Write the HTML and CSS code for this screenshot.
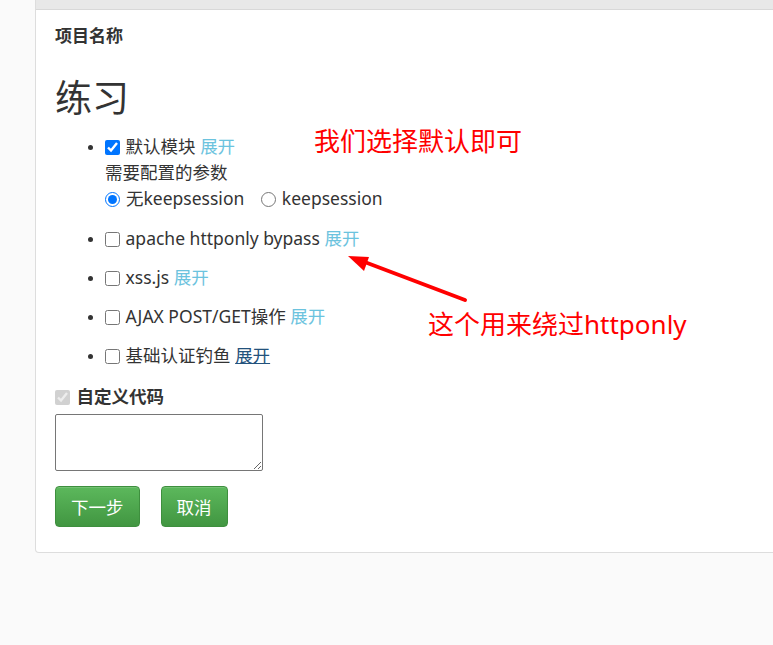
FILE: index.html
```html
<!DOCTYPE html>
<html lang="zh-CN">
<head>
<meta charset="utf-8">
<title>练习</title>
<link rel="stylesheet" href="styles.css">
</head>
<body>
<div class="page">
  <div class="panel">
    <div class="panel-heading"></div>
    <div class="panel-body">
      <div class="field-label">项目名称</div>
      <h1 class="title">练习</h1>
      <ul class="modules">
        <li>
          <label><input type="checkbox" checked> 默认模块</label> <a class="expand" href="#">展开</a>
          <div class="params-title">需要配置的参数</div>
          <div class="params">
            <label class="radio first"><input type="radio" name="ks" checked>无keepsession</label>
            <label class="radio"><input type="radio" name="ks">keepsession</label>
          </div>
        </li>
        <li><label><input type="checkbox"> apache httponly bypass</label> <a class="expand" href="#">展开</a></li>
        <li><label><input type="checkbox"> xss.js</label> <a class="expand" href="#">展开</a></li>
        <li><label><input type="checkbox"> AJAX POST/GET操作</label> <a class="expand" href="#">展开</a></li>
        <li><label><input type="checkbox"> 基础认证钓鱼</label> <a class="expand active" href="#">展开</a></li>
      </ul>
      <label class="custom"><input type="checkbox" checked disabled> 自定义代码</label>
      <textarea class="code"></textarea>
      <div class="actions">
        <button class="btn" type="button">下一步</button>
        <button class="btn" type="button">取消</button>
      </div>
    </div>
  </div>

  <div class="note note-1">我们选择默认即可</div>
  <div class="note note-2">这个用来绕过httponly</div>
  <svg class="arrow" width="773" height="645" viewBox="0 0 773 645">
    <line x1="465" y1="300" x2="362" y2="261" stroke="#ff0000" stroke-width="4" stroke-linecap="round"/>
    <polygon points="348,256 369,257 364,271" fill="#ff0000"/>
  </svg>
</div>
</body>
</html>
```

FILE: styles.css
```css
html, body {
  margin: 0;
  padding: 0;
  background: #fafafa;
}
body {
  font-family: "Noto Sans", "Noto Sans CJK SC", sans-serif;
  color: #333;
  font-size: 17.5px;
  width: 773px;
  height: 645px;
  overflow: hidden;
}
.page {
  position: relative;
  padding-left: 35px;
  height: 645px;
}
.panel {
  background: #fff;
  border: 1px solid #ddd;
  border-top: none;
  border-radius: 0 0 4px 4px;
  margin-right: -20px;
}
.panel-heading {
  height: 9px;
  background: #e8e8e8;
  border-bottom: 1px solid #d8d8d8;
}
.panel-body {
  padding: 15px 19px 25px;
}
.field-label {
  font-weight: bold;
  font-size: 17px;
  line-height: 22px;
}
.title {
  font-size: 37px;
  font-weight: normal;
  line-height: 42px;
  margin: 30px 0 14px;
}
.modules {
  margin: 0 0 17px;
  padding-left: 50px;
  line-height: 26px;
}
.modules li::marker {
  font-size: 14px;
}
.modules li {
  margin-bottom: 13px;
}
.modules li:first-child {
  margin-bottom: 14px;
}
.modules li:last-child {
  margin-bottom: 0;
}
input[type="checkbox"], input[type="radio"] {
  width: 15px;
  height: 15px;
  margin: 0 1px 0 0;
  vertical-align: -2px;
}
.expand {
  color: #6cc3de;
  text-decoration: none;
}
.expand.active {
  color: #23527c;
  text-decoration: underline;
}
.params .radio input {
  margin-right: 6px;
}
.params .radio.first {
  margin-right: 12px;
}
.custom {
  display: block;
  font-weight: bold;
  line-height: 22px;
}
.custom input {
  margin-right: 2px;
}
.code {
  display: block;
  width: 208px;
  height: 57px;
  box-sizing: border-box;
  margin-top: 7px;
  border: 1px solid #767676;
  border-radius: 2px;
  resize: both;
}
.actions {
  display: flex;
  gap: 21px;
  margin-top: 15px;
}
.btn {
  height: 41px;
  padding: 0 15px;
  font-family: "Noto Sans CJK SC", sans-serif;
  font-size: 17.5px;
  color: #fff;
  background: linear-gradient(#5cb85c, #419641);
  border: 1px solid #3e8f3e;
  border-radius: 4px;
  box-shadow: inset 0 1px 0 rgba(255,255,255,.15);
}
.note {
  position: absolute;
  color: #ff0000;
  font-size: 26px;
  line-height: 32px;
  font-family: "Noto Sans CJK SC", sans-serif;
}
.note-1 {
  left: 314px;
  top: 124px;
}
.note-2 {
  left: 428px;
  top: 308px;
  font-family: "Noto Sans", "Noto Sans CJK SC", sans-serif;
}
.arrow {
  position: absolute;
  left: 0;
  top: 0;
  pointer-events: none;
}
```
